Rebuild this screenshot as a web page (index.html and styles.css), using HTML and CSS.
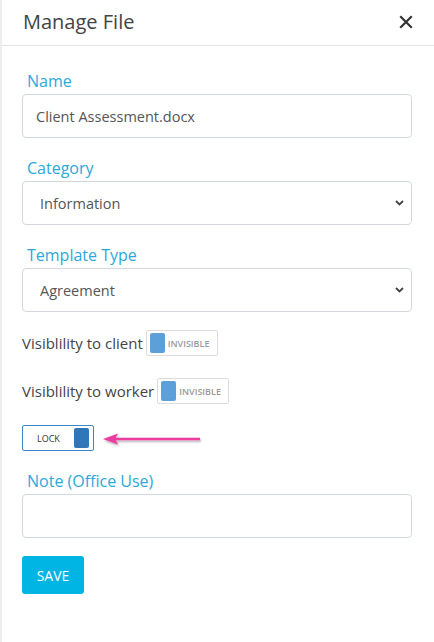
FILE: index.html
```html
<!DOCTYPE html>
<html lang="en">

<head>
  <meta charset="UTF-8">
  <meta name="viewport" content="width=device-width, initial-scale=1.0">
  <title>Manage File</title>
  <link rel="stylesheet" href="styles.css">
</head>

<body>
  <div class="panel">
    <header class="panel-header">
      <h2>Manage File</h2>
      <button class="close-btn" aria-label="Close">
        <svg width="14" height="14" viewBox="0 0 14 14">
          <path d="M2 2 L12 12 M12 2 L2 12" stroke="#333" stroke-width="2.2" stroke-linecap="square" />
        </svg>
      </button>
    </header>

    <form class="panel-body">
      <div class="form-group">
        <label class="field-label" for="name">Name</label>
        <input type="text" id="name" class="form-control" value="Client Assessment.docx">
      </div>

      <div class="form-group">
        <label class="field-label" for="category">Category</label>
        <div class="select-wrap">
          <select id="category" class="form-control">
            <option>Information</option>
          </select>
          <svg class="chevron" width="9" height="6" viewBox="0 0 9 6">
            <path d="M1 1 L4.5 4.5 L8 1" fill="none" stroke="#444" stroke-width="1.8" />
          </svg>
        </div>
      </div>

      <div class="form-group">
        <label class="field-label" for="template">Template Type</label>
        <div class="select-wrap">
          <select id="template" class="form-control">
            <option>Agreement</option>
          </select>
          <svg class="chevron" width="9" height="6" viewBox="0 0 9 6">
            <path d="M1 1 L4.5 4.5 L8 1" fill="none" stroke="#444" stroke-width="1.8" />
          </svg>
        </div>
      </div>

      <div class="toggle-row client-row">
        <span>Visiblility to client</span>
        <span class="toggle">
          <span class="knob"></span>
          <span class="toggle-text">INVISIBLE</span>
        </span>
      </div>

      <div class="toggle-row worker-row">
        <span>Visiblility to worker</span>
        <span class="toggle">
          <span class="knob"></span>
          <span class="toggle-text">INVISIBLE</span>
        </span>
      </div>

      <div class="toggle-row lock-row">
        <span class="toggle toggle-lock">
          <span class="toggle-text">LOCK</span>
          <span class="knob"></span>
        </span>
        <svg class="pointer" width="104" height="16" viewBox="0 0 104 16">
          <defs>
            <filter id="shadow" x="-10%" y="-50%" width="120%" height="200%">
              <feDropShadow dx="1" dy="1.5" stdDeviation="1" flood-color="#000" flood-opacity="0.35" />
            </filter>
          </defs>
          <g filter="url(#shadow)">
            <line x1="12" y1="7" x2="98" y2="7" stroke="#ea3c9d" stroke-width="2.5" />
            <path d="M1 7 L16 1.5 L13 7 L16 12.5 Z" fill="#ea3c9d" />
          </g>
        </svg>
      </div>

      <div class="form-group">
        <label class="field-label" for="note">Note (Office Use)</label>
        <textarea id="note" class="form-control note"></textarea>
      </div>

      <button type="button" class="btn-save">SAVE</button>
    </form>
  </div>
</body>

</html>
```

FILE: styles.css
```css
* {
  margin: 0;
  padding: 0;
  box-sizing: border-box;
}

body {
  font-family: "Open Sans", "Noto Sans", sans-serif;
  background-color: #fff;
  color: #444;
}

.panel {
  min-height: 100vh;
  border-left: 2px solid #eeeeee;
}

/* header */
.panel-header {
  display: flex;
  justify-content: space-between;
  align-items: center;
  height: 46px;
  padding: 0 21px 2px 21px;
  border-bottom: 1px solid #e3e3e3;
}

.panel-header h2 {
  font-size: 20px;
  font-weight: 400;
  color: #444;
}

.close-btn {
  background: none;
  border: none;
  display: flex;
  cursor: pointer;
}

/* form */
.panel-body {
  padding: 24px 22px 0 20px;
}

.form-group {
  margin-bottom: 19px;
}

.field-label {
  display: block;
  color: #2aa9da;
  font-size: 16px;
  line-height: 22px;
  margin: 0 0 2px 5px;
}

.form-control {
  display: block;
  width: 100%;
  height: 44px;
  border: 1px solid #d4d8de;
  border-radius: 4px;
  padding: 0 13px;
  font-family: inherit;
  font-size: 14.5px;
  color: #555;
  background-color: #fff;
}

.select-wrap {
  position: relative;
}

select.form-control {
  appearance: none;
  padding-left: 17px;
}

.chevron {
  position: absolute;
  right: 8px;
  top: 19px;
  pointer-events: none;
}

textarea.form-control {
  resize: none;
  padding: 10px 13px;
}

/* toggles */
.toggle-row {
  display: flex;
  align-items: center;
  gap: 3px;
  font-size: 15px;
  color: #444;
}

.client-row {
  margin-top: -1px;
}

.worker-row {
  margin-top: 22px;
}

.lock-row {
  margin-top: 21px;
  margin-bottom: 19px;
  gap: 8px;
}

.toggle {
  display: inline-flex;
  align-items: center;
  width: 72px;
  height: 26px;
  border: 1px solid #dcdcdc;
  border-radius: 2px;
  padding: 0 3px;
  gap: 3px;
}

.toggle .knob {
  width: 15px;
  height: 20px;
  border-radius: 2px;
  background-color: #5c9fd9;
}

.toggle-text {
  font-size: 9px;
  font-weight: 600;
  color: #999;
}

.toggle-lock {
  border-color: #3d85c6;
  justify-content: space-between;
  padding: 0 4px 0 14px;
}

.toggle-lock .toggle-text {
  color: #333;
  font-weight: 400;
  font-size: 9px;
}

.toggle-lock .knob {
  background-color: #2f77b8;
}

.pointer {
  margin-top: 3px;
}

/* button */
.btn-save {
  width: 62px;
  height: 38px;
  border: none;
  border-radius: 3px;
  background-color: #00b4e4;
  color: #fff;
  font-family: inherit;
  font-size: 14px;
  margin-top: -1px;
}
```
